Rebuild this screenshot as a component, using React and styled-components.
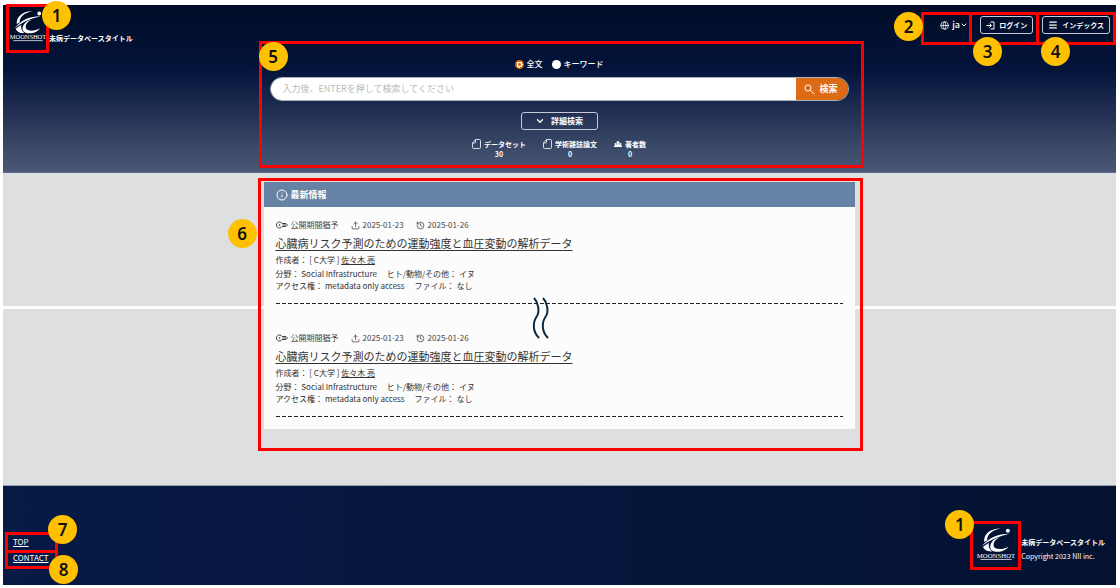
import React from "react";
import styled, { createGlobalStyle, css } from "styled-components";
import { Globe, ChevronDown, Search, Info, Menu, Upload, History } from "lucide-react";

const GlobalStyle = createGlobalStyle`
  *, *::before, *::after { box-sizing: border-box; }
  body {
    margin: 0;
    background: #fff;
    color: #333;
    font-family: "Noto Sans CJK JP", "Noto Sans", sans-serif;
    font-size: 8px;
    line-height: 12px;
  }
  h1, h2, h3, p, ul, dl, dd { margin: 0; padding: 0; font-weight: inherit; font-size: inherit; }
  button, input, select { font: inherit; color: inherit; }
  a { color: inherit; }
  svg { display: block; flex: none; }
`;

const Page = styled.div`
  padding: 5px 4px 3px 3px;
`;

/* Callouts: a red frame round a part, with a numbered badge on it */
const Frame = styled.div`
  position: relative;
  border: 3px solid #f00;
`;

const Badge = styled.span`
  position: absolute;
  z-index: 2;
  top: ${(p) => p.$top}px;
  left: ${(p) => p.$left}px;
  width: 29px;
  height: 29px;
  border-radius: 50%;
  background: #ffc000;
  color: #111;
  font: 600 17px/29px "Noto Sans", sans-serif;
  text-align: center;
`;

const Hero = styled.header`
  display: grid;
  grid-template-columns: 1fr minmax(0, 605px) 1fr;
  align-items: start;
  padding: 0 0 4px 3px;
  border-bottom: 1px solid #5d6c8e;
  background: linear-gradient(#010d27 0%, #03133a 38%, #1e2d50 62%, #3a4967 85%, #4a5876 100%);
  color: #fff;
`;

const Brand = styled.div`
  display: flex;
  align-items: flex-end;
  margin-top: -1px;
`;

const LogoFrame = styled(Frame)`
  width: ${(p) => (p.$wide ? 51 : 43)}px;
  height: 49px;
  padding-top: ${(p) => (p.$wide ? 3 : 2)}px;
  display: flex;
  justify-content: center;
`;

const SiteTitle = styled.p`
  font-size: 7px;
  line-height: 14px;
  font-weight: 700;
  white-space: nowrap;
`;

const BrandTitle = styled(SiteTitle)`
  padding-bottom: 8px;
`;

const Tools = styled.nav`
  display: flex;
  justify-content: flex-end;
  margin-top: 7px;
`;

const ToolFrame = styled(Frame)`
  display: flex;
  align-items: flex-start;
  justify-content: flex-end;
  height: 33px;
  padding: 1px 3px 0 ${(p) => p.$indent}px;
  & + & { margin-left: -3px; }
`;

const LangPicker = styled.label`
  position: relative;
  display: flex;
  align-items: center;
  gap: 3px;
  height: 18px;
  margin-right: -2px;
`;

const LangSelect = styled.select`
  appearance: none;
  width: 16px;
  padding: 0;
  border: 0;
  background: transparent;
  font-size: 9px;
  line-height: 14px;
  font-weight: 500;
  option { color: #333; }
`;

const LangArrow = styled.span`
  position: absolute;
  right: 0;
  pointer-events: none;
`;

const outlined = css`
  display: flex;
  align-items: center;
  justify-content: center;
  border: 1px solid #c5cad6;
  border-radius: 3px;
  background: transparent;
  color: #fff;
  font-weight: 700;
  white-space: nowrap;
  cursor: pointer;
`;

const ToolButton = styled.button`
  ${outlined}
  gap: 4px;
  height: 18px;
  padding: 0 5px;
  font-size: 7px;
`;

const SearchPanel = styled(Frame)`
  display: flex;
  flex-direction: column;
  align-items: center;
  margin-top: 36px;
  padding: 14px 12px 6px 8px;
`;

const Modes = styled.div`
  display: flex;
  gap: 9px;
`;

const Mode = styled.label`
  display: flex;
  align-items: center;
  gap: 3px;
  font-weight: 500;
`;

const Radio = styled.input`
  appearance: none;
  width: 9px;
  height: 9px;
  margin: 0;
  border-radius: 50%;
  background: #fff;
  &:checked {
    background: radial-gradient(circle, #dd6a14 0 1px, #fff 2px 3px, #dd6a14 3px);
  }
`;

const SearchForm = styled.form`
  display: flex;
  width: 100%;
  height: 24px;
  margin-top: 7px;
  border: 1px solid #aab2c2;
  border-radius: 12px;
  overflow: hidden;
`;

const SearchInput = styled.input`
  flex: 1;
  min-width: 0;
  padding: 0 12px;
  border: 0;
  background: #fff;
  color: #333;
  font-size: 9px;
  &::placeholder { color: #bbb; opacity: 1; }
`;

const SearchButton = styled.button`
  display: flex;
  align-items: center;
  gap: 4px;
  padding: 0 10px 0 8px;
  border: 0;
  background: #dd6a14;
  color: #fff;
  font-size: 9px;
  font-weight: 700;
`;

const DetailButton = styled.button`
  ${outlined}
  gap: 6px;
  width: 77px;
  height: 18px;
  margin-top: 11px;
`;

const Stats = styled.dl`
  display: flex;
  gap: 17px;
  margin-top: 9px;
  font-size: 7px;
  line-height: 10px;
  font-weight: 700;
  text-align: center;
`;

const StatName = styled.dt`
  display: flex;
  align-items: center;
  gap: 3px;
`;

const Main = styled.main`
  padding: 5px 0 34px 1px;
  border-bottom: 1px solid #96a0a6;
  background: linear-gradient(#fff, #fff) 0 133px / 100% 3px no-repeat #dedfe1;
`;

const NewsFrame = styled(Frame)`
  max-width: 605px;
  margin: 0 auto;
  padding: 1px 5px 19px 3px;
`;

const Card = styled.section`
  background: #fcfcfc;
`;

const CardHeader = styled.h2`
  display: flex;
  align-items: center;
  gap: 3px;
  height: 25px;
  padding: 0 12px;
  background: #6682a5;
  color: #fff;
  font-size: 9px;
  font-weight: 700;
`;

const NewsList = styled.ul`
  display: grid;
  gap: 27px;
  padding: 11px 12px 12px;
  list-style: none;
`;

const NewsItem = styled.li`
  position: relative;
  padding-bottom: 12px;
  background: repeating-linear-gradient(90deg, #222 0 4px, transparent 4px 6px) 0 100% / 100% 1px no-repeat;
`;

const Meta = styled.div`
  display: flex;
  gap: 12px;
  line-height: 14px;
  color: #444;
`;

const MetaEntry = styled.span`
  display: flex;
  align-items: center;
  gap: 3px;
`;

const ItemTitle = styled.h3`
  margin: 2px 0;
  font-size: 11px;
  line-height: 18px;
  a { text-underline-offset: 2px; text-decoration-thickness: 1px; }
`;

const Author = styled.p`
  margin-bottom: 2px;
`;

const Facts = styled.p`
  display: flex;
  gap: 10px;
`;

const Wave = styled.svg`
  position: absolute;
  bottom: -35px;
  left: 255px;
`;

const Footer = styled.footer`
  display: flex;
  justify-content: space-between;
  align-items: flex-start;
  min-height: 99px;
  padding: 35px 11px 13px 2px;
  background: linear-gradient(90deg, #071a46, #041232);
  color: #fff;
`;

const FooterLinks = styled.nav`
  margin-top: 11px;
`;

const LinkFrame = styled(Frame)`
  width: 53px;
  padding: 2px 5px 3px;
  line-height: 10px;
  & + & { margin-top: -3px; padding-top: 0; }
`;

const FooterBrand = styled.div`
  display: flex;
`;

const FooterText = styled.div`
  padding-top: 14px;
  font-size: 7px;
  line-height: 14px;
  white-space: nowrap;
`;

function Logo({ width }) {
  return (
    <svg width={width} height="34" viewBox="0 0 112 100" preserveAspectRatio="xMidYMid meet" fill="#fff" role="img" aria-label="MOONSHOT">
      <path d="M69 4C44 3 19 18 21 44l9-5C29 22 44 9 69 4Z" />
      <path d="M13 58C36 31 61 20 95 20 67 27 40 36 13 58Z" />
      <path d="M67 31C54 36 46 47 50 58c5 9 27 9 43-1-9 14-28 18-42 15-12-3-15-15-9-25 5-9 14-15 25-16Z" />
      <path d="M18 59c-1 0 9-8 17-12-2 9 2 20 10 25-14 1-24-5-27-13Z" />
      <circle cx="91" cy="11" r="6" />
      <text x="56" y="91" textAnchor="middle" fontFamily="Liberation Serif, serif" fontSize="20">MOONSHOT</text>
      <path d="M10 94h92v3H10z" opacity=".75" />
    </svg>
  );
}

const LoginIcon = () => (
  <svg width="9" height="9" viewBox="0 0 18 18" fill="none" stroke="currentColor" strokeWidth="2">
    <path d="M1 9h9M7 5l4 4-4 4M9 2h7v14H9" />
  </svg>
);

const DocIcon = () => (
  <svg width="9" height="10" viewBox="0 0 18 20" fill="none" stroke="currentColor" strokeWidth="1.6">
    <path d="M7 1h8q2 0 2 2v14q0 2-2 2H3q-2 0-2-2V8ZM7 1v5q0 2-2 2H1" />
  </svg>
);

const PeopleIcon = () => (
  <svg width="8" height="8" viewBox="0 0 16 16" fill="currentColor">
    <circle cx="8" cy="5" r="3" />
    <circle cx="3" cy="8" r="2" />
    <circle cx="13" cy="8" r="2" />
    <path d="M0 14v-2q1-2 4-2 1-2 4-2t4 2q3 0 4 2v2Z" />
  </svg>
);

const SearchIcon = () => (
  <svg width="11" height="11" viewBox="0 0 22 22" fill="none" stroke="currentColor" strokeWidth="2">
    <circle cx="8" cy="8" r="6" />
    <path d="M13 13l8 7" />
  </svg>
);

const KeyIcon = () => (
  <svg width="12" height="8" viewBox="0 0 24 16" fill="none" stroke="currentColor" strokeWidth="2">
    <path d="M12 5A6 6 0 1 0 12 11h8l3-3-3-3Z" />
    <circle cx="7" cy="8" r="1" />
    <path d="M13 8h7" />
  </svg>
);

function Entry() {
  return (
    <>
      <Meta>
        <MetaEntry><KeyIcon />公開期間猶予</MetaEntry>
        <MetaEntry><Upload size={9} strokeWidth={2} />2025-01-23</MetaEntry>
        <MetaEntry><History size={9} strokeWidth={2} />2025-01-26</MetaEntry>
      </Meta>
      <ItemTitle><a href="#item">心臓病リスク予測のための運動強度と血圧変動の解析データ</a></ItemTitle>
      <Author>作成者： [ C大学 ] <a href="#author">佐々木 亮</a></Author>
      <Facts><span>分野： Social Infrastructure</span><span>ヒト/動物/その他： イヌ</span></Facts>
      <Facts><span>アクセス権： metadata only access</span><span>ファイル： なし</span></Facts>
    </>
  );
}

const stats = [
  { name: "データセット", value: 30, icon: <DocIcon /> },
  { name: "学術雑誌論文", value: 0, icon: <DocIcon /> },
  { name: "著者数", value: 0, icon: <PeopleIcon /> },
];

export default function App() {
  return (
    <>
      <GlobalStyle />
      <Page>
        <Hero>
          <Brand>
            <LogoFrame>
              <Logo width={36} />
              <Badge $top={-6} $left={33}>1</Badge>
            </LogoFrame>
            <BrandTitle as="h1">未病データベースタイトル</BrandTitle>
          </Brand>

          <SearchPanel>
            <Badge $top={-2} $left={-3}>5</Badge>
            <Modes role="radiogroup" aria-label="検索">
              <Mode><Radio type="radio" name="mode" defaultChecked />全文</Mode>
              <Mode><Radio type="radio" name="mode" />キーワード</Mode>
            </Modes>
            <SearchForm onSubmit={(e) => e.preventDefault()}>
              <SearchInput type="text" aria-label="検索" placeholder="入力後、ENTERを押して検索してください" />
              <SearchButton type="submit"><SearchIcon />検索</SearchButton>
            </SearchForm>
            <DetailButton type="button"><ChevronDown size={10} strokeWidth={3} />詳細検索</DetailButton>
            <Stats>
              {stats.map((s) => (
                <div key={s.name}>
                  <StatName>{s.icon}{s.name}</StatName>
                  <dd>{s.value}</dd>
                </div>
              ))}
            </Stats>
          </SearchPanel>

          <Tools>
            <ToolFrame $indent={16}>
              <LangPicker>
                <Globe size={9} strokeWidth={2} />
                <LangSelect aria-label="ja" defaultValue="ja"><option value="ja">ja</option></LangSelect>
                <LangArrow><ChevronDown size={8} strokeWidth={3} /></LangArrow>
              </LangPicker>
              <Badge $top={-3} $left={-30}>2</Badge>
            </ToolFrame>
            <ToolFrame $indent={8}>
              <ToolButton type="button"><LoginIcon />ログイン</ToolButton>
              <Badge $top={22} $left={1}>3</Badge>
            </ToolFrame>
            <ToolFrame $indent={3}>
              <ToolButton type="button"><Menu size={10} strokeWidth={3} />インデックス</ToolButton>
              <Badge $top={22} $left={2}>4</Badge>
            </ToolFrame>
          </Tools>
        </Hero>

        <Main>
          <NewsFrame>
            <Badge $top={38} $left={-33}>6</Badge>
            <Card>
              <CardHeader><Info size={12} strokeWidth={2} />最新情報</CardHeader>
              <NewsList>
                <NewsItem>
                  <Entry />
                  <Wave width="20" height="42" viewBox="0 0 20 42" fill="none" stroke="#0b2a3d" strokeWidth="2">
                    <path d="M3 1C7 5 9 14 6 19C1 26 2 35 8 41" />
                    <path d="M12 1C16 5 18 14 15 19C10 26 11 35 17 41" />
                  </Wave>
                </NewsItem>
                <NewsItem><Entry /></NewsItem>
              </NewsList>
            </Card>
          </NewsFrame>
        </Main>

        <Footer>
          <FooterLinks>
            <LinkFrame><a href="#top">TOP</a><Badge $top={-20} $left={40}>7</Badge></LinkFrame>
            <LinkFrame><a href="#contact">CONTACT</a><Badge $top={2} $left={41}>8</Badge></LinkFrame>
          </FooterLinks>
          <FooterBrand>
            <LogoFrame $wide>
              <Logo width={38} />
              <Badge $top={-14} $left={-28}>1</Badge>
            </LogoFrame>
            <FooterText>
              <SiteTitle>未病データベースタイトル</SiteTitle>
              <p>Copyright 2023 NII inc.</p>
            </FooterText>
          </FooterBrand>
        </Footer>
      </Page>
    </>
  );
}
